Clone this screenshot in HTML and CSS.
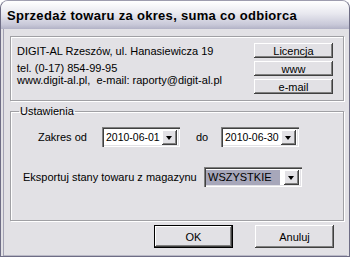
FILE: index.html
```html
<!DOCTYPE html>
<html lang="pl">
<head>
    <meta charset="UTF-8">
    <title>Sprzedaż towaru za okres</title>
    <link rel="stylesheet" href="styles.css">
</head>
<body>
    <div class="window">
        <div class="titlebar">Sprzedaż towaru za okres, suma co odbiorca</div>
        <div class="client">
            <div class="group info">
                <div class="info-text">
                    <div class="line-1">DIGIT-AL Rzeszów, ul. Hanasiewicza 19</div>
                    <div>tel. (0-17) 854-99-95</div>
                    <div>www.digit-al.pl,&nbsp; e-mail: raporty@digit-al.pl</div>
                </div>
                <div class="info-buttons">
                    <button class="btn small">Licencja</button>
                    <button class="btn small">www</button>
                    <button class="btn small">e-mail</button>
                </div>
            </div>

            <fieldset class="group settings">
                <legend>Ustawienia</legend>
                <div class="row range">
                    <span class="label-od">Zakres od</span>
                    <div class="combo date"><span class="value">2010-06-01</span><span class="arrow"></span></div>
                    <span class="label-do">do</span>
                    <div class="combo date"><span class="value">2010-06-30</span><span class="arrow"></span></div>
                </div>
                <div class="row store">
                    <span class="label-store">Eksportuj stany towaru z magazynu</span>
                    <div class="combo store-combo"><span class="value selected">WSZYSTKIE</span><span class="arrow"></span></div>
                </div>
            </fieldset>

            <div class="actions">
                <button class="btn big default">OK</button>
                <button class="btn big">Anuluj</button>
            </div>
        </div>
    </div>
</body>
</html>
```

FILE: styles.css
```css
body {
    margin: 0;
    background: #ffffff;
    font-family: 'Liberation Sans', Arial, sans-serif;
    font-size: 11px;
    color: #000;
}

.window {
    width: 350px;
    height: 257px;
    box-sizing: border-box;
    background: #e2e1e5;
    border-radius: 8px 8px 0 0;
    border: 1px solid #6e6d85;
    border-top-color: #9d9cae;
    box-shadow: inset 1px 0 #f4f4f7, inset -1px -1px #b9b8c6;
    overflow: hidden;
    display: flex;
    flex-direction: column;
}

.titlebar {
    height: 28px;
    padding-left: 6px;
    line-height: 29px;
    font-size: 13px;
    font-weight: bold;
    letter-spacing: 0.3px;
    color: #000;
    background: linear-gradient(#ffffff, #e8e8ef 45%, #c8c8d8 85%, #b2b2c6);
}

.client {
    flex: 1;
    padding: 7px 3px 0 7px;
    border-left: 2px solid #e2e1e5;
    border-right: 2px solid #e2e1e5;
    box-shadow: inset 1px 0 #a3a2b3;
}

.group {
    border: 1px solid #a0a0a4;
    box-shadow: inset 1px 1px #ffffff, 1px 1px #ffffff;
    margin: 0;
}

.info {
    height: 63px;
    display: flex;
    justify-content: space-between;
    padding: 0 10px 0 6px;
}

.info-text {
    padding-top: 8px;
    line-height: 12px;
}

.info-text .line-1 {
    margin-bottom: 5px;
}

.info-buttons {
    display: flex;
    flex-direction: column;
    gap: 3px;
    padding-top: 6px;
}

.btn {
    font-family: 'Liberation Sans', Arial, sans-serif;
    font-size: 11px;
    background: #e2e1e5;
    border: none;
    padding: 0;
    color: #000;
    box-shadow: inset -1px -1px #404040, inset 1px 1px #ffffff, inset -2px -2px #808080, inset 2px 2px #e2e1e5;
}

.btn.small {
    width: 79px;
    height: 15px;
}

.btn.big {
    width: 79px;
    height: 23px;
}

.btn.default {
    outline: 1px solid #000;
    outline-offset: -1px;
    box-shadow: inset -2px -2px #404040, inset 2px 2px #ffffff, inset -3px -3px #808080;
}

.settings {
    margin-top: 4px;
    height: 116px;
    box-sizing: border-box;
    padding: 0 0 0 12px;
}

.settings legend {
    padding: 0 1px;
    margin-left: -4px;
    line-height: 12px;
}

.row {
    display: flex;
    align-items: center;
}

.range {
    margin-top: 10px;
}

.label-od {
    margin-left: 15px;
    width: 64px;
}

.label-do {
    margin-left: 16px;
    width: 25px;
}

.store {
    margin-top: 20px;
}

.label-store {
    width: 181px;
}

.combo {
    display: flex;
    align-items: center;
    justify-content: space-between;
    background: #ffffff;
    box-sizing: border-box;
    height: 20px;
    padding: 2px 3px 2px 2px;
    box-shadow: inset 1px 1px #808080, inset 2px 2px #404040, inset -1px -1px #ffffff, inset -2px -2px #e2e1e5;
}

.combo .value {
    padding-left: 2px;
    font-size: 10.5px;
    line-height: 15px;
    white-space: nowrap;
}

.combo .value.selected {
    flex: 1;
    font-size: 11px;
    background: #a7a7ba;
    margin-right: 4px;
}

.date {
    width: 78px;
}

.store-combo {
    width: 98px;
}

.arrow {
    flex: none;
    width: 15px;
    height: 15px;
    box-sizing: border-box;
    background: #e2e1e5;
    box-shadow: inset -1px -1px #404040, inset 1px 1px #ffffff, inset -2px -2px #808080;
    position: relative;
}

.arrow::after {
    content: '';
    position: absolute;
    left: 4px;
    top: 6px;
    border-left: 3.5px solid transparent;
    border-right: 3.5px solid transparent;
    border-top: 4px solid #000;
}

.actions {
    display: flex;
    justify-content: flex-end;
    gap: 22px;
    padding: 4px 10px 0 0;
}
```
